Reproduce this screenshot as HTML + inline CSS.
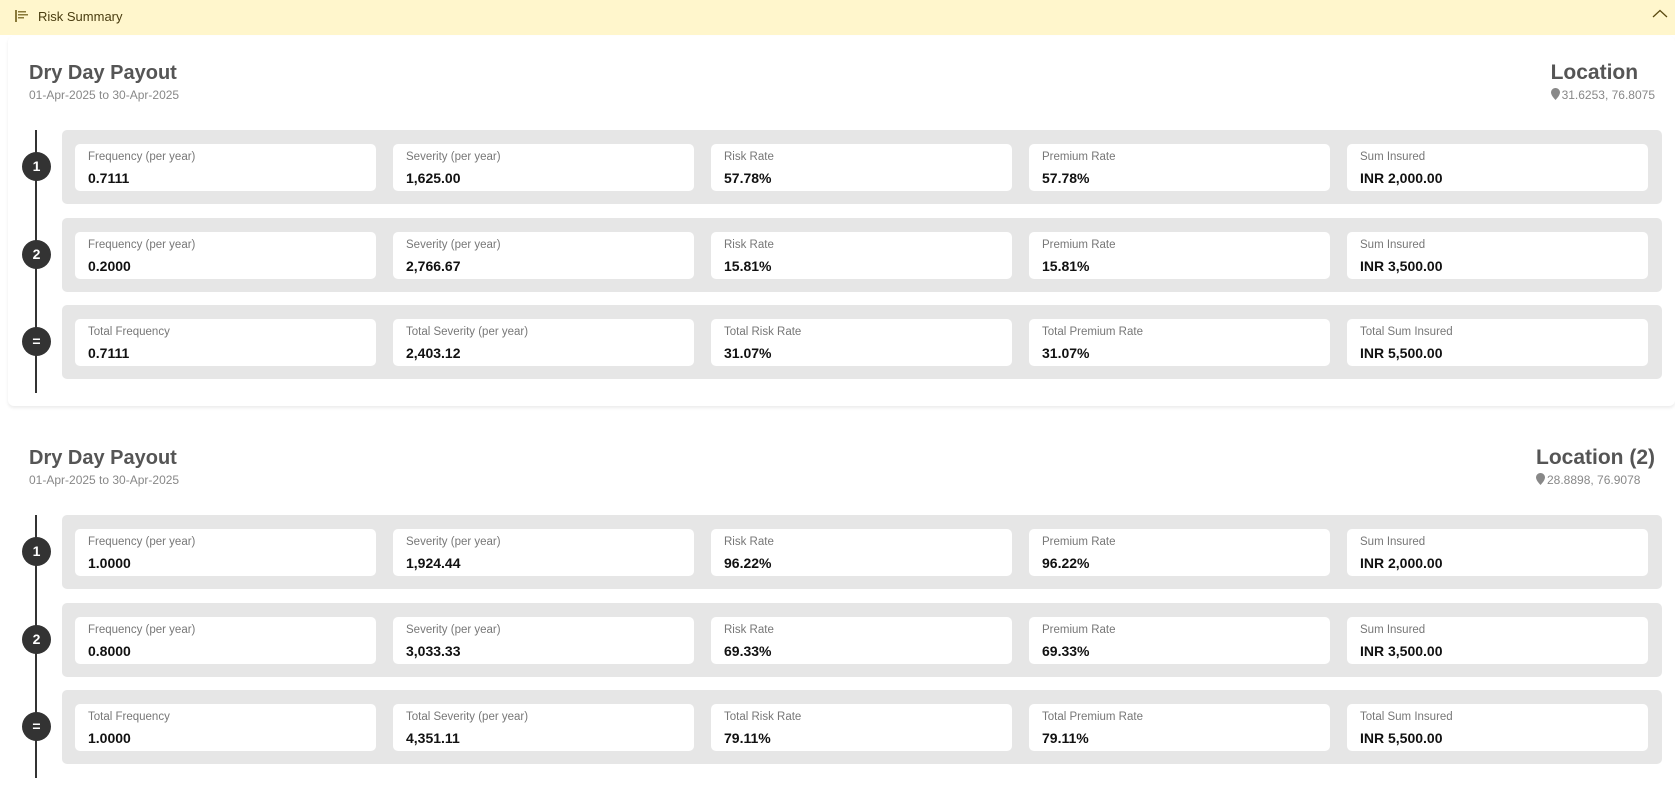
<!DOCTYPE html>
<html><head><meta charset="utf-8"><style>
*{box-sizing:border-box;margin:0;padding:0}
body{width:1675px;height:746px;overflow:hidden;background:#fff;font-family:"Liberation Sans",Arial,sans-serif;position:relative}
.hdr{position:absolute;left:0;top:0;width:1675px;height:35px;background:#fff6cc}
.hdr .t{position:absolute;left:38px;top:9px;font-size:13px;color:#4a3d10}
.card{position:absolute;left:8px;width:1667px;height:370px;background:#fff;border-radius:6px;box-shadow:0 2px 3px rgba(0,0,0,.08)}
.title{position:absolute;left:21px;top:26px;font-size:20px;font-weight:bold;color:#555}
.date{position:absolute;left:21px;top:52px;font-size:12px;color:#888}
.loc{position:absolute;right:20px;top:25px}
.loc .lt{font-size:21px;font-weight:bold;color:#555}
.loc .lc{font-size:12px;color:#888;margin-top:3px;white-space:nowrap}
.line{position:absolute;left:27px;top:94px;width:1.5px;height:263px;background:#333}
.row{position:absolute;left:54px;width:1600px;height:74px;background:#e6e6e6;border-radius:5px}
.circ{position:absolute;left:14px;width:29px;height:29px;border-radius:50%;background:#333;color:#fff;font-weight:bold;font-size:14px;text-align:center;line-height:29px}
.cell{position:absolute;top:14px;width:301px;height:47px;background:#fff;border-radius:5px;padding:6px 13px}
.cell .l{font-size:11.5px;color:#777;line-height:14px}
.cell .v{font-size:14px;font-weight:bold;color:#111;margin-top:6px;line-height:16px}
</style></head><body>
<div class="hdr">
<svg style="position:absolute;left:15px;top:10px" width="14" height="12" viewBox="0 0 14 12"><g fill="#8a7a3a"><rect x="0" y="0" width="2" height="12"/><rect x="3" y="1" width="8" height="1.5"/><rect x="3" y="4" width="10" height="1.5"/><rect x="3" y="7" width="6" height="1.5"/></g></svg>
<div class="t">Risk Summary</div>
<svg style="position:absolute;left:1652px;top:9px" width="16" height="10" viewBox="0 0 16 10"><path d="M1 8 L8 1.5 L15 8" fill="none" stroke="#5a4a10" stroke-width="1.3"/></svg>
</div>
<div id="c"></div>
<script>
const data=[
 {top:36,loc:"Location",coord:"31.6253, 76.8075",rows:[
  ["1",["Frequency (per year)","0.7111"],["Severity (per year)","1,625.00"],["Risk Rate","57.78%"],["Premium Rate","57.78%"],["Sum Insured","INR 2,000.00"]],
  ["2",["Frequency (per year)","0.2000"],["Severity (per year)","2,766.67"],["Risk Rate","15.81%"],["Premium Rate","15.81%"],["Sum Insured","INR 3,500.00"]],
  ["=",["Total Frequency","0.7111"],["Total Severity (per year)","2,403.12"],["Total Risk Rate","31.07%"],["Total Premium Rate","31.07%"],["Total Sum Insured","INR 5,500.00"]]]},
 {top:421,loc:"Location (2)",coord:"28.8898, 76.9078",rows:[
  ["1",["Frequency (per year)","1.0000"],["Severity (per year)","1,924.44"],["Risk Rate","96.22%"],["Premium Rate","96.22%"],["Sum Insured","INR 2,000.00"]],
  ["2",["Frequency (per year)","0.8000"],["Severity (per year)","3,033.33"],["Risk Rate","69.33%"],["Premium Rate","69.33%"],["Sum Insured","INR 3,500.00"]],
  ["=",["Total Frequency","1.0000"],["Total Severity (per year)","4,351.11"],["Total Risk Rate","79.11%"],["Total Premium Rate","79.11%"],["Total Sum Insured","INR 5,500.00"]]]}
];
let h="";
data.forEach((d,i)=>{
 h+=`<div class="card" style="top:${d.top}px;${i==1?'box-shadow:none':''}"><div class="title">Dry Day Payout</div><div class="date">01-Apr-2025 to 30-Apr-2025</div>
 <div class="loc"><div class="lt">${d.loc}</div><div class="lc"><svg width="9" height="12" viewBox="0 0 9 12" style="vertical-align:-1px;margin-right:2px"><path d="M4.5 0C2 0 0 2 0 4.5 0 7.5 4.5 12 4.5 12S9 7.5 9 4.5C9 2 7 0 4.5 0Z" fill="#888"/></svg>${d.coord}</div></div>
 <div class="line"></div>`;
 d.rows.forEach((r,j)=>{
  const t=94+j*87.5;
  h+=`<div class="circ" style="top:${t+22}px">${r[0]}</div><div class="row" style="top:${t}px">`;
  for(let k=1;k<=5;k++)h+=`<div class="cell" style="left:${13+(k-1)*318}px"><div class="l">${r[k][0]}</div><div class="v">${r[k][1]}</div></div>`;
  h+=`</div>`;
 });
 h+=`</div>`;
});
document.getElementById("c").innerHTML=h;
</script>
</body></html>
